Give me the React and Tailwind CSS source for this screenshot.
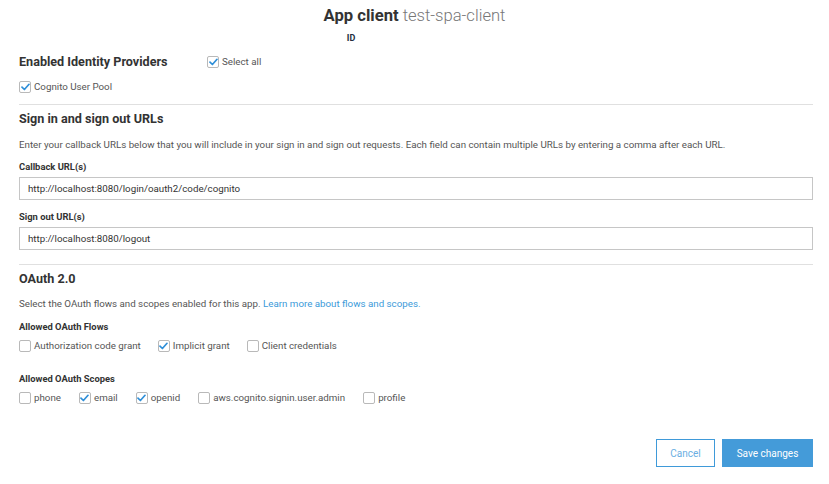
import React, { useState } from 'react';

/* ─────────────────────────────────────────────
   Checkbox – small square with blue tick
───────────────────────────────────────────── */
const Check = ({ label, checked: initial = false }) => {
  const [checked, setChecked] = useState(initial);
  return (
    <label
      className="flex items-center gap-[3px] h-[14px] cursor-pointer select-none"
      onClick={() => setChecked((v) => !v)}
    >
      <span className="w-[12px] h-[12px] border border-[#b9b9b9] rounded-[2px] bg-white flex items-center justify-center shrink-0">
        {checked && (
          <svg width="9" height="8" viewBox="0 0 9 8" fill="none">
            <path d="M1 4.2L3.4 6.5L8 1.3" stroke="#2f8fd8" strokeWidth="1.7" strokeLinecap="round" strokeLinejoin="round" />
          </svg>
        )}
      </span>
      <span className="text-[9.75px] leading-[14px] text-[#555]">{label}</span>
    </label>
  );
};

const Label = ({ children }) => (
  <p className="text-[9.4px] font-bold text-[#333] leading-[12px]">{children}</p>
);

const Heading = ({ children, className = '' }) => (
  <h2 className={`text-[12.6px] leading-[16px] font-bold text-[#333] ${className}`}>{children}</h2>
);

const UrlInput = ({ value }) => (
  <input
    readOnly
    value={value}
    className="w-full h-[23px] border border-[#c6c6c6] px-[8px] text-[9.75px] text-[#333] outline-none bg-white"
  />
);

export default function App() {
  return (
    <div className="w-[829px] h-[484px] bg-white overflow-hidden font-['Roboto',sans-serif] text-[#555]">
      {/* ── Title ── */}
      <header className="flex flex-col items-center pt-[5px]">
        <h1 className="text-[16.6px] leading-[22px] text-[#333]">
          <span className="font-bold">App client</span>{' '}
          <span className="font-light text-[#777]">test-spa-client</span>
        </h1>
        <span className="text-[9px] leading-[12px] font-bold text-[#232f3e] mt-[5px] mr-[127px]">ID</span>
      </header>

      <main className="pl-[19px] pr-[16px]">
        {/* ── Identity providers ── */}
        <section className="pt-[10px] pb-[10px] border-b border-[#e0e0e0]">
          <div className="flex items-center">
            <Heading className="w-[188px]">Enabled Identity Providers</Heading>
            <Check label="Select all" checked />
          </div>
          <div className="mt-[10px]">
            <Check label="Cognito User Pool" checked />
          </div>
        </section>

        {/* ── URLs ── */}
        <section className="pt-[6px] pb-[14px] border-b border-[#e0e0e0]">
          <Heading>Sign in and sign out URLs</Heading>
          <p className="text-[9.75px] leading-[14px] mt-[11px]">
            Enter your callback URLs below that you will include in your sign in and sign out requests. Each field can contain multiple URLs by entering a comma after each URL.
          </p>
          <div className="mt-[9px] flex flex-col gap-[4px]">
            <Label>Callback URL(s)</Label>
            <UrlInput value="http://localhost:8080/login/oauth2/code/cognito" />
          </div>
          <div className="mt-[11px] flex flex-col gap-[4px]">
            <Label>Sign out URL(s)</Label>
            <UrlInput value="http://localhost:8080/logout" />
          </div>
        </section>

        {/* ── OAuth ── */}
        <section className="pt-[6px]">
          <Heading>OAuth 2.0</Heading>
          <p className="text-[9.75px] leading-[14px] mt-[10px]">
            Select the OAuth flows and scopes enabled for this app.{' '}
            <a className="text-[#3b9ad9]">Learn more about flows and scopes.</a>
          </p>

          <div className="mt-[10px]">
            <Label>Allowed OAuth Flows</Label>
            <div className="flex items-center gap-[17px] mt-[6px]">
              <Check label="Authorization code grant" />
              <Check label="Implicit grant" checked />
              <Check label="Client credentials" />
            </div>
          </div>

          <div className="mt-[20px]">
            <Label>Allowed OAuth Scopes</Label>
            <div className="flex items-center gap-[18px] mt-[6px]">
              <Check label="phone" />
              <Check label="email" checked />
              <Check label="openid" checked />
              <Check label="aws.cognito.signin.user.admin" />
              <Check label="profile" />
            </div>
          </div>
        </section>

        {/* ── Actions ── */}
        <div className="flex justify-end gap-[7px] mt-[34px]">
          <button className="w-[59px] h-[28px] border border-[#3f9ad9] text-[10px] text-[#6aaee2] bg-white">
            Cancel
          </button>
          <button className="w-[91px] h-[28px] bg-[#449bd9] text-[10px] text-white">
            Save changes
          </button>
        </div>
      </main>
    </div>
  );
}
